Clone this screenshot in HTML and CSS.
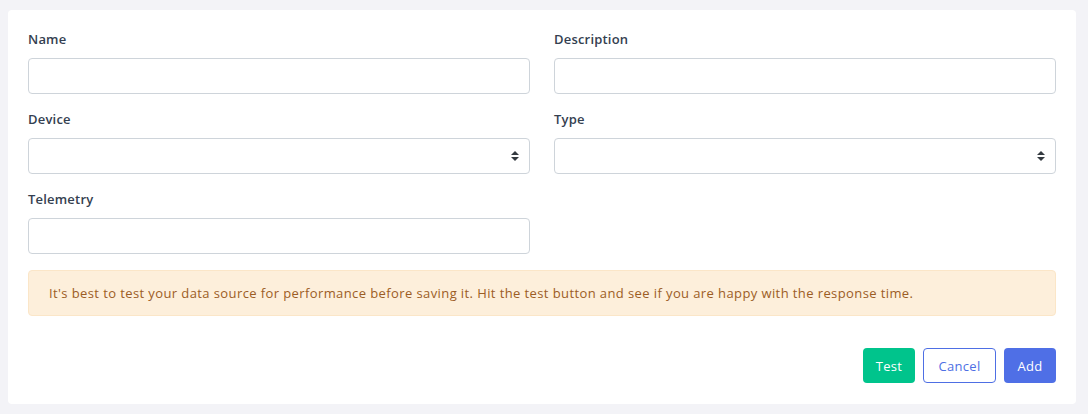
FILE: index.html
```html
<!DOCTYPE html>
<html lang="en">
<head>
<meta charset="utf-8">
<title>Data source</title>
<link rel="stylesheet" href="styles.css">
</head>
<body>
<div class="page">
  <form class="card">
    <div class="grid">
      <div class="field">
        <label class="label">Name</label>
        <input class="control" type="text">
      </div>
      <div class="field">
        <label class="label">Description</label>
        <input class="control" type="text">
      </div>
      <div class="field">
        <label class="label">Device</label>
        <div class="select">
          <span class="caret"><svg width="8" height="12" viewBox="0 0 8 12"><path d="M4 1 L8 5 H0 Z M0 7 H8 L4 11 Z" fill="#343a40"/></svg></span>
        </div>
      </div>
      <div class="field">
        <label class="label">Type</label>
        <div class="select">
          <span class="caret"><svg width="8" height="12" viewBox="0 0 8 12"><path d="M4 1 L8 5 H0 Z M0 7 H8 L4 11 Z" fill="#343a40"/></svg></span>
        </div>
      </div>
      <div class="field">
        <label class="label">Telemetry</label>
        <input class="control" type="text">
      </div>
    </div>
    <div class="alert">It's best to test your data source for performance before saving it. Hit the test button and see if you are happy with the response time.</div>
    <div class="actions">
      <button type="button" class="btn btn-test">Test</button>
      <button type="button" class="btn btn-cancel">Cancel</button>
      <button type="button" class="btn btn-add">Add</button>
    </div>
  </form>
</div>
</body>
</html>
```
FILE: styles.css
```css
html, body {
  margin: 0;
  padding: 0;
  background: #f3f3f7;
  font-family: "Open Sans", "Liberation Sans", sans-serif;
}
.page {
  padding: 10px 12px 10px 8px;
}
.card {
  background: #ffffff;
  border-radius: 4px;
  padding: 20px 20px 21px 20px;
  display: flex;
  flex-direction: column;
}
.grid {
  display: grid;
  grid-template-columns: 1fr 1fr;
  column-gap: 24px;
  row-gap: 16px;
}
.field {
  display: flex;
  flex-direction: column;
  gap: 9px;
}
.label {
  font-size: 13px;
  line-height: 19px;
  font-weight: 600;
  letter-spacing: 0.2px;
  color: #344050;
}
.control, .select {
  box-sizing: border-box;
  height: 36px;
  border: 1px solid #ced4da;
  border-radius: 4px;
  background: #fff;
  margin: 0;
  width: 100%;
  font: inherit;
}
.select {
  display: flex;
  align-items: center;
  justify-content: flex-end;
  padding-right: 10px;
}
.caret {
  display: flex;
}
.alert {
  margin-top: 16px;
  box-sizing: border-box;
  height: 46px;
  display: flex;
  align-items: center;
  padding: 0 20px;
  background: #fdefdb;
  border: 1px solid #fbe6c8;
  border-radius: 4px;
  color: #9c5d25;
  font-size: 13px;
  letter-spacing: 0.4px;
}
.actions {
  margin-top: 32px;
  display: flex;
  justify-content: flex-end;
  gap: 8px;
}
.btn {
  height: 35px;
  box-sizing: border-box;
  border-radius: 4px;
  font: inherit;
  font-size: 13px;
  letter-spacing: 0.3px;
  padding: 0;
  border: 1px solid transparent;
  cursor: pointer;
}
.btn-test {
  background: #00c48c;
  color: #fff;
  width: 52px;
}
.btn-cancel {
  background: #fff;
  border-color: #4e6fe4;
  color: #4e6fe4;
  width: 73px;
}
.btn-add {
  background: #4f6fe6;
  color: #fff;
  width: 52px;
}
```
